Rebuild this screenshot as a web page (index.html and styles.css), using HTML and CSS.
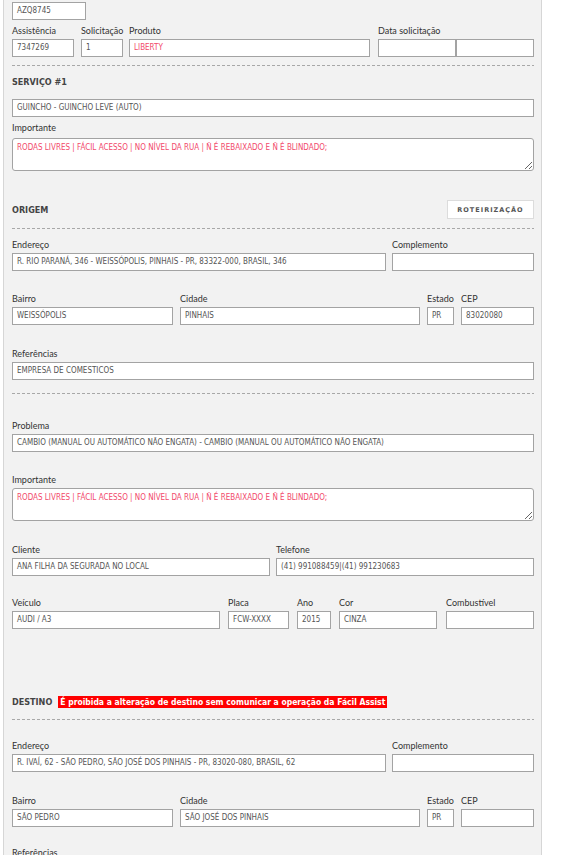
FILE: index.html
```html
<!DOCTYPE html>
<html lang="pt-BR">
<head>
<meta charset="utf-8">
<title>Serviço</title>
<link rel="stylesheet" href="styles.css">
</head>
<body>
<div class="panel">
  <div class="in w74">AZQ8745</div>

  <div class="row mt5">
    <div class="f w62"><label>Assistência</label><div class="in">7347269</div></div>
    <div class="f w42 ml7"><label>Solicitação</label><div class="in">1</div></div>
    <div class="f w241 ml6"><label>Produto</label><div class="in red">LIBERTY</div></div>
    <div class="f w156 ml8"><label>Data solicitação</label>
      <div class="pair"><div class="in"></div><div class="in"></div></div>
    </div>
  </div>

  <div class="dash mt8"></div>
  <div class="head mt10">SERVIÇO #1</div>
  <div class="in full mt11">GUINCHO - GUINCHO LEVE (AUTO)</div>

  <div class="f mt5"><label>Importante</label><textarea class="ta ta-gap4" readonly>RODAS LIVRES | FÁCIL ACESSO | NO NÍVEL DA RUA | Ñ É REBAIXADO E Ñ É BLINDADO;</textarea></div>

  <div class="headrow mt29">
    <div class="head">ORIGEM</div>
    <button class="btn" type="button">ROTEIRIZAÇÃO</button>
  </div>
  <div class="dash mt9"></div>

  <div class="row mt10">
    <div class="f w374"><label>Endereço</label><div class="in">R. RIO PARANÁ, 346 - WEISSÓPOLIS, PINHAIS - PR, 83322-000, BRASIL, 346</div></div>
    <div class="f w142 ml6"><label>Complemento</label><div class="in"></div></div>
  </div>

  <div class="row mt22">
    <div class="f w161"><label>Bairro</label><div class="in">WEISSÓPOLIS</div></div>
    <div class="f w240 ml7"><label>Cidade</label><div class="in">PINHAIS</div></div>
    <div class="f w27 ml7"><label>Estado</label><div class="in">PR</div></div>
    <div class="f w73 ml7"><label>CEP</label><div class="in">83020080</div></div>
  </div>

  <div class="f mt23"><label>Referências</label><div class="in">EMPRESA DE COMESTICOS</div></div>

  <div class="dash mt13"></div>

  <div class="f mt26"><label>Problema</label><div class="in">CAMBIO (MANUAL OU AUTOMÁTICO NÃO ENGATA) - CAMBIO (MANUAL OU AUTOMÁTICO NÃO ENGATA)</div></div>

  <div class="f mt22"><label>Importante</label><textarea class="ta" readonly>RODAS LIVRES | FÁCIL ACESSO | NO NÍVEL DA RUA | Ñ É REBAIXADO E Ñ É BLINDADO;</textarea></div>

  <div class="row mt23">
    <div class="f w258"><label>Cliente</label><div class="in">ANA FILHA DA SEGURADA NO LOCAL</div></div>
    <div class="f w258 ml6"><label>Telefone</label><div class="in">(41) 991088459|(41) 991230683</div></div>
  </div>

  <div class="row mt21">
    <div class="f w208"><label>Veículo</label><div class="in">AUDI / A3</div></div>
    <div class="f w61 ml8"><label>Placa</label><div class="in">FCW-XXXX</div></div>
    <div class="f w34 ml8"><label>Ano</label><div class="in">2015</div></div>
    <div class="f w98 ml8"><label>Cor</label><div class="in">CINZA</div></div>
    <div class="f w88 ml9"><label>Combustível</label><div class="in"></div></div>
  </div>

  <div class="destrow mt66">
    <div class="head">DESTINO</div>
    <span class="warn">É proibida a alteração de destino sem comunicar a operação da Fácil Assist</span>
  </div>
  <div class="dash mt11"></div>

  <div class="row mt20">
    <div class="f w374"><label>Endereço</label><div class="in">R. IVAÍ, 62 - SÃO PEDRO, SÃO JOSÉ DOS PINHAIS - PR, 83020-080, BRASIL, 62</div></div>
    <div class="f w142 ml6"><label>Complemento</label><div class="in"></div></div>
  </div>

  <div class="row mt23">
    <div class="f w161"><label>Bairro</label><div class="in">SÃO PEDRO</div></div>
    <div class="f w240 ml7"><label>Cidade</label><div class="in">SÃO JOSÉ DOS PINHAIS</div></div>
    <div class="f w27 ml7"><label>Estado</label><div class="in">PR</div></div>
    <div class="f w73 ml7"><label>CEP</label><div class="in"></div></div>
  </div>

  <div class="f mt20"><label>Referências</label><div class="in"></div></div>
</div>
</body>
</html>
```

FILE: styles.css
```css
html, body {
  margin: 0;
  padding: 0;
  background: #fff;
}

.panel {
  margin-left: 3px;
  width: 522px;
  padding: 2px 7px 40px 8px;
  background: #f2f2f2;
  border-left: 1px solid #d6d6d6;
  border-right: 1px solid #d6d6d6;
  font-family: "DejaVu Sans Condensed", "DejaVu Sans", sans-serif;
}

.row {
  display: flex;
  align-items: flex-end;
}

.f {
  display: flex;
  flex-direction: column;
}

.f label {
  display: block;
  height: 12px;
  line-height: 12px;
  margin-bottom: 2px;
  font-family: Lato, "Open Sans", sans-serif;
  font-size: 9px;
  color: #333;
  white-space: nowrap;
}

.in {
  display: block;
  box-sizing: border-box;
  width: 100%;
  height: 18px;
  margin: 0;
  padding: 0 4px;
  border: 1px solid #a3a3a3;
  background: #fff;
  font-family: "DejaVu Sans Condensed", "DejaVu Sans", sans-serif;
  font-size: 8px;
  line-height: 16px;
  color: #555;
  white-space: nowrap;
  overflow: hidden;
}

.in.red { color: #f2496b; }

.in.w74 { width: 74px; }
.in.full { width: 100%; }

.pair {
  display: flex;
}
.pair .in { width: 78px; }

.ta {
  display: block;
  box-sizing: border-box;
  width: 100%;
  height: 33px;
  margin: 0;
  padding: 3px 4px;
  border: 1px solid #a3a3a3;
  border-radius: 3px;
  background: #fff;
  font-family: "DejaVu Sans Condensed", "DejaVu Sans", sans-serif;
  font-size: 8px;
  line-height: 11px;
  color: #f2496b;
  resize: vertical;
  outline: none;
}
.ta-gap4 { margin-top: 2px; }

.dash {
  height: 1px;
  background: repeating-linear-gradient(to right, #a8a8a8 0 3px, transparent 3px 5px);
}

.head {
  height: 12px;
  line-height: 12px;
  font-family: "DejaVu Sans Condensed", "DejaVu Sans", sans-serif;
  font-weight: bold;
  font-size: 9px;
  color: #444;
}

.headrow {
  display: flex;
  justify-content: space-between;
  align-items: center;
  height: 19px;
}

.btn {
  box-sizing: border-box;
  width: 87px;
  height: 19px;
  margin: 0;
  padding: 0;
  border: 1px solid #dcdcdc;
  background: #fff;
  font-family: "DejaVu Sans", sans-serif;
  font-weight: bold;
  font-size: 6.5px;
  letter-spacing: 1px;
  color: #555;
}

.destrow {
  display: flex;
  align-items: center;
  height: 13px;
}

.warn {
  margin-left: 6px;
  height: 12px;
  line-height: 12px;
  padding: 0 2px;
  background: #ff0000;
  color: #fff;
  font-family: "DejaVu Sans Condensed", "DejaVu Sans", sans-serif;
  font-weight: bold;
  font-size: 8.5px;
  white-space: nowrap;
}

/* widths */
.w27 { width: 27px; }
.w34 { width: 34px; }
.w42 { width: 42px; }
.w61 { width: 61px; }
.w62 { width: 62px; }
.w73 { width: 73px; }
.w88 { width: 88px; }
.w98 { width: 98px; }
.w142 { width: 142px; }
.w156 { width: 156px; }
.w161 { width: 161px; }
.w208 { width: 208px; }
.w240 { width: 240px; }
.w241 { width: 241px; }
.w258 { width: 258px; }
.w374 { width: 374px; }

/* horizontal gaps */
.ml6 { margin-left: 6px; }
.ml7 { margin-left: 7px; }
.ml8 { margin-left: 8px; }
.ml9 { margin-left: 9px; }

/* vertical spacing */
.mt5 { margin-top: 5px; }
.mt8 { margin-top: 8px; }
.mt9 { margin-top: 9px; }
.mt10 { margin-top: 10px; }
.mt11 { margin-top: 11px; }
.mt13 { margin-top: 13px; }
.mt20 { margin-top: 20px; }
.mt21 { margin-top: 21px; }
.mt22 { margin-top: 22px; }
.mt23 { margin-top: 23px; }
.mt26 { margin-top: 26px; }
.mt29 { margin-top: 29px; }
.mt66 { margin-top: 66px; }
```
